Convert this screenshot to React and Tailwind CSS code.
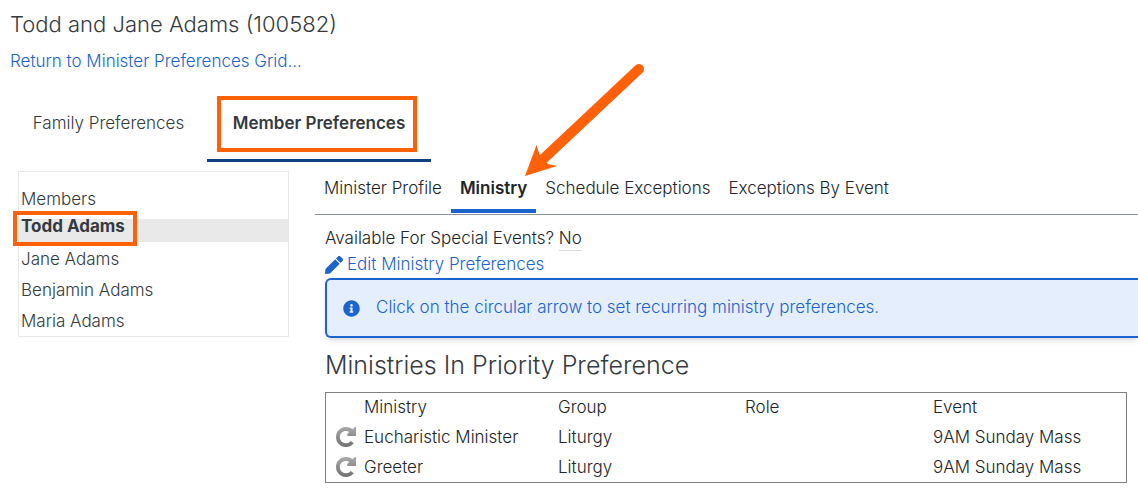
import React, { useState } from 'react';
import { FaPen, FaInfoCircle } from 'react-icons/fa';

const members = ['Todd Adams', 'Jane Adams', 'Benjamin Adams', 'Maria Adams'];

const subTabs = ['Minister Profile', 'Ministry', 'Schedule Exceptions', 'Exceptions By Event'];

const ministries = [
  { id: 1, ministry: 'Eucharistic Minister', group: 'Liturgy', role: '', event: '9AM Sunday Mass' },
  { id: 2, ministry: 'Greeter', group: 'Liturgy', role: '', event: '9AM Sunday Mass' },
];

const RecurIcon = () => (
  <svg width="20" height="20" viewBox="0 0 20 20" className="block">
    <defs>
      <linearGradient id="recur" x1="0" y1="0" x2="0" y2="1">
        <stop offset="0" stopColor="#a8a8a8" />
        <stop offset="1" stopColor="#707070" />
      </linearGradient>
    </defs>
    <path
      fill="url(#recur)"
      d="M10 0C4.400 0 0 4.400 0 10s4.400 10 10 10c3.200 0 6-1.400 7.800-3.700l-3-2.400A6 6 0 0 1 10 16.200c-3.500 0-6.200-2.700-6.200-6.200S6.500 4 10 4c1.200 0 2.300.300 3.300 1L11.300 7v2H20V0h-1.200l-2.300 2.300C14.700.800 12.500 0 10 0z"
    />
  </svg>
);

const Arrow = () => (
  <svg width="124" height="116" viewBox="0 0 124 116" className="absolute left-[522px] top-[62px] pointer-events-none">
    <path d="M117 7L18 100" stroke="#ff6109" strokeWidth="10" strokeLinecap="round" />
    <path d="M3 114L14.500 83L18 94L26 102L35 104z" fill="#ff6109" />
  </svg>
);

const MemberList = ({ selected, setSelected }) => (
  <nav className="w-[271px] shrink-0 mt-[9px] h-[166px] pt-3 border border-[#e8e8e8] text-[#343a40]">
    <h2 className="h-[31px] pl-0.5 leading-[30px]">Members</h2>
    <ul>
      {members.map(name => (
        <li key={name} className="relative h-[31px] pt-1">
          <button
            onClick={() => setSelected(name)}
            className={
              name === selected
                ? 'block w-full h-[23px] pl-0.5 pb-2 text-left leading-[15px] bg-[#e9e9e9] font-bold'
                : 'block w-full h-[23px] pl-0.5 pb-1 text-left leading-[19px]'
            }
          >
            {name}
          </button>
          {name === selected && (
            <span className="absolute -left-1.5 -top-1 w-[124px] h-[35px] border-4 border-[#ff6109] pointer-events-none" />
          )}
        </li>
      ))}
    </ul>
  </nav>
);

const MinistryTable = () => (
  <table className="w-full table-fixed border-separate border-spacing-0 border border-[#808080] text-left">
    <thead>
      <tr className="leading-[29px]">
        <th className="w-[38px] p-0" />
        <th className="w-[194px] p-0 font-light">Ministry</th>
        <th className="w-[187px] p-0 font-light">Group</th>
        <th className="w-[188px] p-0 font-light">Role</th>
        <th className="p-0 font-light">Event</th>
      </tr>
    </thead>
    <tbody>
      {ministries.map(row => (
        <tr key={row.id} className="leading-[30px]">
          <td className="p-0 pl-2.5">
            <button aria-label="Set recurring preferences" className="block">
              <RecurIcon />
            </button>
          </td>
          <td className="p-0">{row.ministry}</td>
          <td className="p-0">{row.group}</td>
          <td className="p-0">{row.role}</td>
          <td className="p-0">{row.event}</td>
        </tr>
      ))}
    </tbody>
  </table>
);

const App = () => {
  const [selected, setSelected] = useState('Todd Adams');
  const [subTab, setSubTab] = useState('Ministry');

  return (
    <div className="relative overflow-hidden bg-white pb-4 font-['Inter',sans-serif] text-[17px] font-light text-[#212529]">
      <header className="pl-2.5 pt-2">
        <h1 className="text-[22px] leading-8 text-[#343a40]">Todd and Jane Adams (100582)</h1>
        <a href="#grid" className="block mt-2 leading-[26px] text-[#1b64ce]">
          Return to Minister Preferences Grid...
        </a>
      </header>

      <div className="flex mt-2.5 ml-2.5 text-[#343a40]">
        <button className="w-[197px] h-[78px] pt-0.5">Family Preferences</button>
        <button className="relative w-[224px] h-[78px] border-b-3 border-[#123f83] pt-[5px] font-semibold">
          Member Preferences
          <span className="absolute left-2.5 top-3 w-[200px] h-14 border-4 border-[#ff6109] pointer-events-none" />
        </button>
      </div>

      <div className="flex pl-[18px]">
        <MemberList selected={selected} setSelected={setSelected} />

        <main className="flex-1 min-w-0 ml-[26px]">
          <div className="flex h-[53px] border-b border-[#8b9499]">
            {subTabs.map(tab => (
              <button
                key={tab}
                onClick={() => setSubTab(tab)}
                className={
                  tab === subTab
                    ? 'h-[51px] px-[9px] border-b-4 border-[#1b64ce] pt-[7px] font-semibold whitespace-nowrap'
                    : 'h-[51px] px-[9px] pt-[3px] whitespace-nowrap'
                }
              >
                {tab}
              </button>
            ))}
          </div>

          <div className="pl-2.5 pt-[11px]">
            <p className="leading-[25px]">
              Available For Special Events? <span className="inline-block border-b border-[#dcdcdc] leading-[23px]">No</span>
            </p>
            <a href="#edit" className="flex items-center gap-1 leading-[27px] text-[#1b64ce]">
              <FaPen size={18} />
              Edit Ministry Preferences
            </a>
            <div className="flex items-center h-[60px] pl-4 rounded-l-md border-2 border-r-0 border-[#1b64ce] bg-[#e5eefd] text-[#1b64ce] shadow-md">
              <FaInfoCircle size={17} />
              <span className="ml-4">Click on the circular arrow to set recurring ministry preferences.</span>
            </div>
            <h2 className="mt-2 mb-2 text-[25px] leading-[38px] text-[#343a40]">Ministries In Priority Preference</h2>
            <div className="pr-[11px]">
              <MinistryTable />
            </div>
          </div>
        </main>
      </div>

      <Arrow />
    </div>
  );
};

export default App;
